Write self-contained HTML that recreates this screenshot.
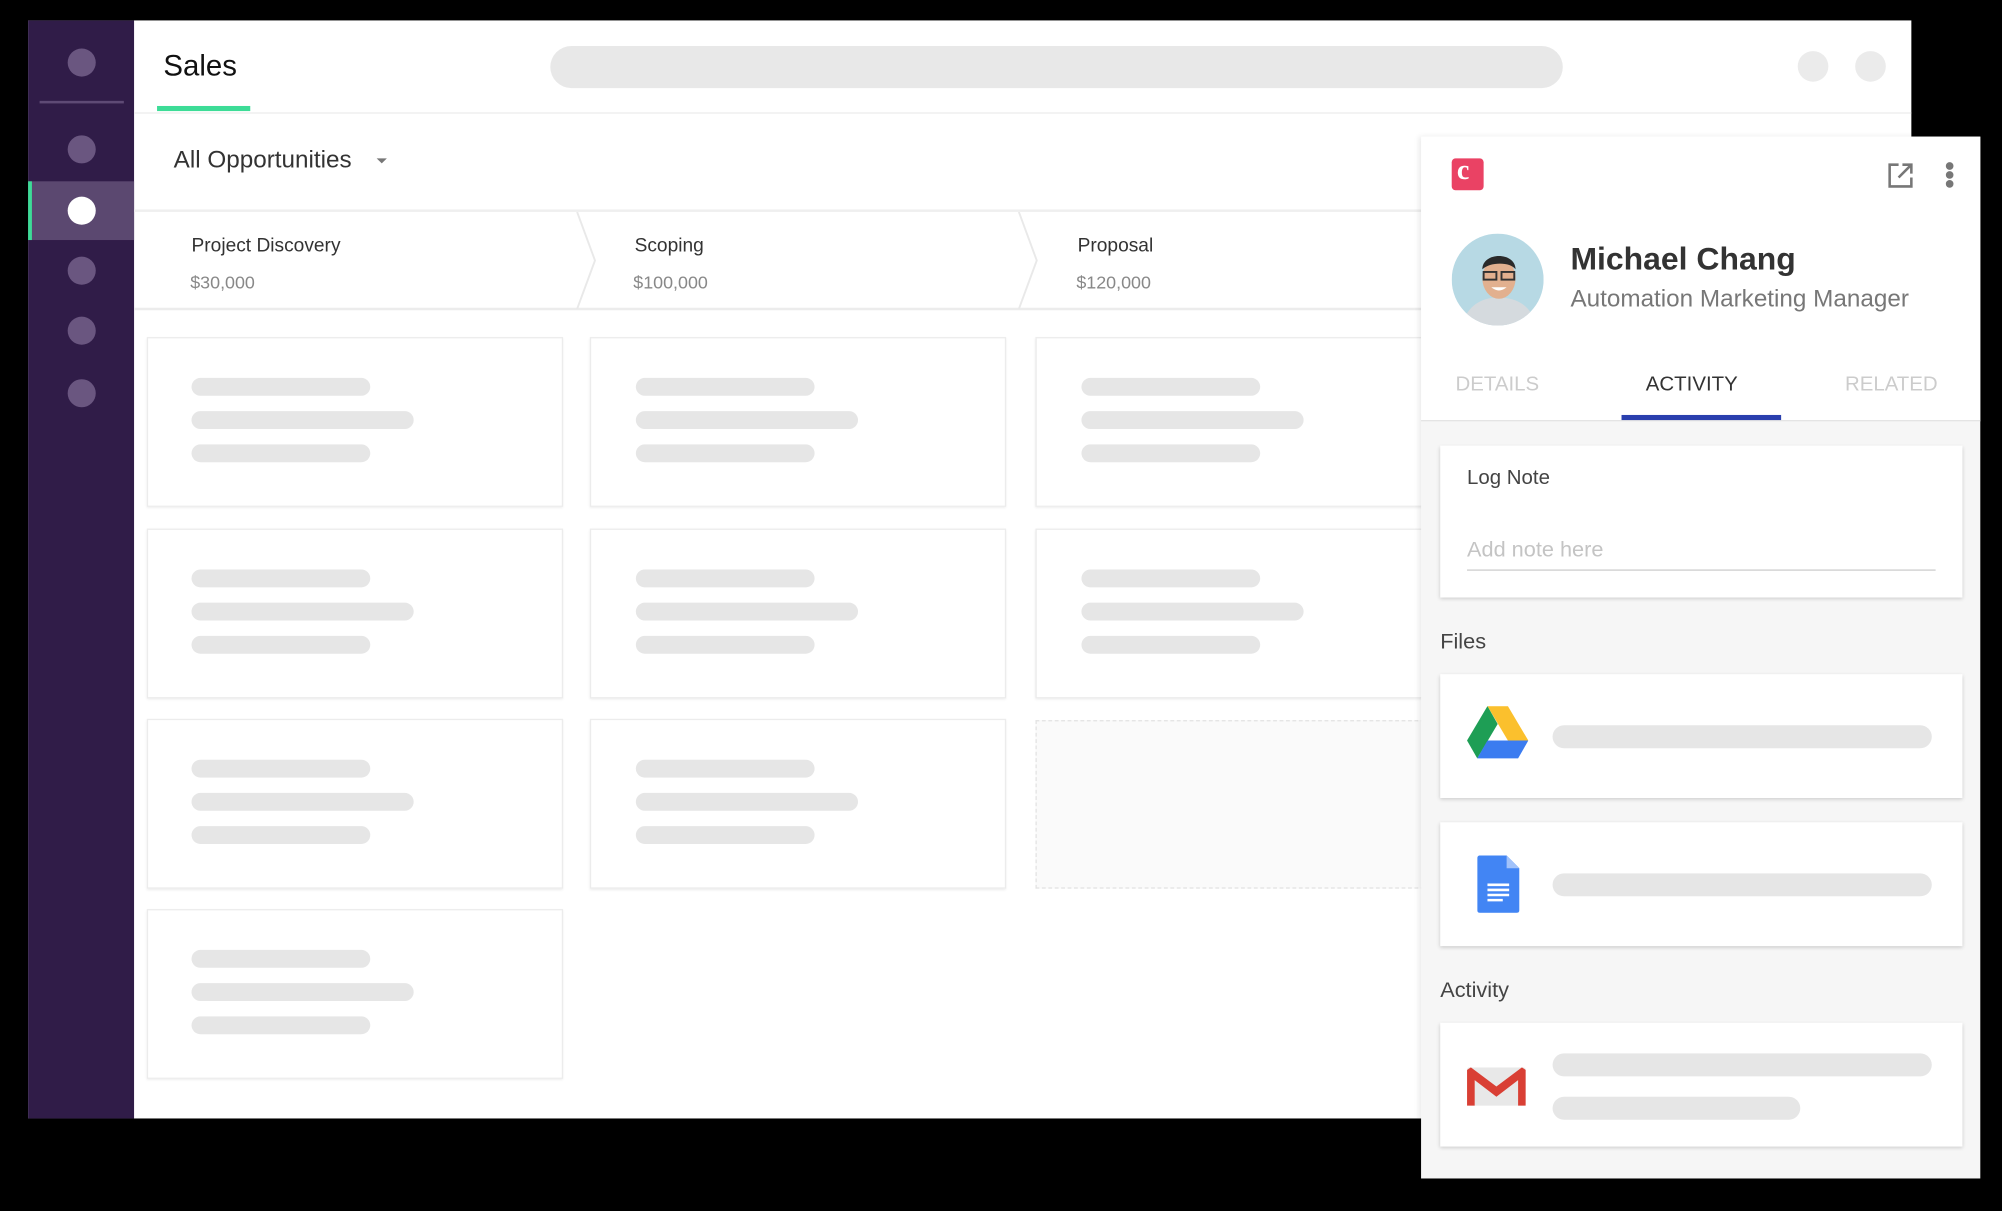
<!DOCTYPE html>
<html><head><meta charset="utf-8"><style>
html,body{margin:0;padding:0;background:#000;width:2002px;height:1211px;overflow:hidden}
#w{position:absolute;left:0;top:0;width:1568px;height:948px;transform:scale(1.27679);transform-origin:0 0;font-family:"Liberation Sans",sans-serif}
.a{position:absolute}
.c{position:absolute;border-radius:50%}
.bar{position:absolute;background:#e6e6e6;border-radius:8px;height:14px}
.card{position:absolute;background:#fff;border:1.5px solid #ececec;box-shadow:0 1px 2px rgba(0,0,0,.08);box-sizing:border-box;width:326px;height:133px}
.pc{position:absolute;left:1128px;width:409px;background:#fff;box-shadow:0 1px 3px rgba(0,0,0,.18)}
.t{position:absolute;white-space:nowrap}
</style></head><body><div id="w">
<!-- main window -->
<div class="a" style="left:22px;top:16px;width:1475px;height:860px;background:#fff"></div>
<div class="a" style="left:22px;top:16px;width:83px;height:860px;background:#301c48"></div>
<div class="c" style="left:53px;top:38px;width:22px;height:22px;background:#6a5680"></div>
<div class="a" style="left:31px;top:79px;width:66px;height:1.5px;background:#5e4a75"></div>
<div class="c" style="left:53px;top:106px;width:22px;height:22px;background:#6a5680"></div>
<div class="a" style="left:22px;top:142px;width:83px;height:46px;background:#5b4870"></div>
<div class="a" style="left:22px;top:142px;width:3px;height:46px;background:#3ddc97"></div>
<div class="c" style="left:53px;top:154px;width:22px;height:22px;background:#fff"></div>
<div class="c" style="left:53px;top:201px;width:22px;height:22px;background:#6a5680"></div>
<div class="c" style="left:53px;top:248px;width:22px;height:22px;background:#6a5680"></div>
<div class="c" style="left:53px;top:297px;width:22px;height:22px;background:#6a5680"></div>
<!-- header -->
<div class="t" style="left:128px;top:38px;font-size:23px;color:#111">Sales</div>
<div class="a" style="left:123px;top:83px;width:73px;height:4px;background:#3ddc97"></div>
<div class="a" style="left:105px;top:88px;width:1392px;height:1px;background:#ececec"></div>
<div class="a" style="left:431px;top:36px;width:793px;height:33px;border-radius:17px;background:#e8e8e8"></div>
<div class="c" style="left:1408px;top:40px;width:24px;height:24px;background:#ebebeb"></div>
<div class="c" style="left:1453px;top:40px;width:24px;height:24px;background:#ebebeb"></div>
<div class="t" style="left:136px;top:115px;font-size:19px;color:#333">All Opportunities</div>
<div class="a" style="left:295px;top:124px;width:0;height:0;border-left:4px solid transparent;border-right:4px solid transparent;border-top:4px solid #777"></div>
<!-- stage bar -->
<div class="a" style="left:105px;top:164px;width:1392px;height:2px;background:#efefef"></div>
<div class="a" style="left:105px;top:241px;width:1392px;height:2px;background:#ececec"></div>
<svg class="a" style="left:440px;top:166px" width="400" height="76"><path d="M12 0 L26 38 L12 76 M358 0 L372 38 L358 76" fill="none" stroke="#e9e9e9" stroke-width="1.5"/></svg>
<div class="t" style="left:150px;top:184px;font-size:15px;color:#333">Project Discovery</div>
<div class="t" style="left:149px;top:213px;font-size:14px;color:#888">$30,000</div>
<div class="t" style="left:497px;top:184px;font-size:15px;color:#333">Scoping</div>
<div class="t" style="left:496px;top:213px;font-size:14px;color:#888">$100,000</div>
<div class="t" style="left:844px;top:184px;font-size:15px;color:#333">Proposal</div>
<div class="t" style="left:843px;top:213px;font-size:14px;color:#888">$120,000</div>
<!-- cards -->
<div id="cards"></div>
<div class="card" style="left:115px;top:264px"><div class="bar" style="left:34px;top:31px;width:140px"></div><div class="bar" style="left:34px;top:57px;width:174px"></div><div class="bar" style="left:34px;top:83px;width:140px"></div></div>
<div class="card" style="left:462px;top:264px"><div class="bar" style="left:35px;top:31px;width:140px"></div><div class="bar" style="left:35px;top:57px;width:174px"></div><div class="bar" style="left:35px;top:83px;width:140px"></div></div>
<div class="card" style="left:811px;top:264px"><div class="bar" style="left:35px;top:31px;width:140px"></div><div class="bar" style="left:35px;top:57px;width:174px"></div><div class="bar" style="left:35px;top:83px;width:140px"></div></div>
<div class="card" style="left:115px;top:414px"><div class="bar" style="left:34px;top:31px;width:140px"></div><div class="bar" style="left:34px;top:57px;width:174px"></div><div class="bar" style="left:34px;top:83px;width:140px"></div></div>
<div class="card" style="left:462px;top:414px"><div class="bar" style="left:35px;top:31px;width:140px"></div><div class="bar" style="left:35px;top:57px;width:174px"></div><div class="bar" style="left:35px;top:83px;width:140px"></div></div>
<div class="card" style="left:811px;top:414px"><div class="bar" style="left:35px;top:31px;width:140px"></div><div class="bar" style="left:35px;top:57px;width:174px"></div><div class="bar" style="left:35px;top:83px;width:140px"></div></div>
<div class="card" style="left:115px;top:563px"><div class="bar" style="left:34px;top:31px;width:140px"></div><div class="bar" style="left:34px;top:57px;width:174px"></div><div class="bar" style="left:34px;top:83px;width:140px"></div></div>
<div class="card" style="left:462px;top:563px"><div class="bar" style="left:35px;top:31px;width:140px"></div><div class="bar" style="left:35px;top:57px;width:174px"></div><div class="bar" style="left:35px;top:83px;width:140px"></div></div>
<div class="a" style="left:811px;top:564px;width:330px;height:132px;border:1.5px dashed #e2e2e2;background:#fafafa;box-sizing:border-box"></div>
<div class="card" style="left:115px;top:712px"><div class="bar" style="left:34px;top:31px;width:140px"></div><div class="bar" style="left:34px;top:57px;width:174px"></div><div class="bar" style="left:34px;top:83px;width:140px"></div></div>
<!-- right panel -->
<div class="a" style="left:1113px;top:107px;width:438px;height:816px;background:#f6f6f6;box-shadow:-2px 0 4px rgba(0,0,0,.08)"></div>
<div class="a" style="left:1113px;top:107px;width:438px;height:222px;background:#fff;border-bottom:1px solid #e2e2e2"></div>
<div class="a" style="left:1137px;top:124px;width:25px;height:25px;border-radius:3px;background:#ea4264"></div>
<div class="t" style="left:1141px;top:120px;font-size:22px;font-weight:bold;color:#fff;font-family:'Liberation Serif',serif">c</div>
<svg class="a" style="left:1478px;top:127px" width="21" height="21" viewBox="0 0 21 21"><path d="M9 2H2v17h17v-7" fill="none" stroke="#777" stroke-width="2"/><path d="M12 2h7v7M19 2L9 12" fill="none" stroke="#777" stroke-width="2"/></svg>
<div class="c" style="left:1524px;top:127px;width:6px;height:6px;background:#777"></div>
<div class="c" style="left:1524px;top:134px;width:6px;height:6px;background:#777"></div>
<div class="c" style="left:1524px;top:141px;width:6px;height:6px;background:#777"></div>
<svg class="a" style="left:1137px;top:183px" width="72" height="72" viewBox="0 0 72 72"><defs><clipPath id="cp"><circle cx="36" cy="36" r="36"/></clipPath></defs><g clip-path="url(#cp)"><rect width="72" height="72" fill="#b7d9e4"/><path d="M8 72 C12 56 24 50 36 50 C48 50 62 54 66 72Z" fill="#d5dade"/><ellipse cx="37" cy="35" rx="13" ry="16" fill="#e2b08f"/><path d="M24 28 C24 14 50 14 50 28 C46 22 30 22 24 28Z" fill="#2a2a2a"/><rect x="25" y="30" width="10" height="6" fill="none" stroke="#333" stroke-width="1.5"/><rect x="39" y="30" width="10" height="6" fill="none" stroke="#333" stroke-width="1.5"/><path d="M31 42 Q37 47 43 42" fill="#fff"/></g></svg>
<div class="t" style="left:1230px;top:189px;font-size:25px;font-weight:bold;color:#333">Michael Chang</div>
<div class="t" style="left:1230px;top:224px;font-size:19px;color:#777">Automation Marketing Manager</div>
<div class="t" style="left:1140px;top:293px;font-size:16px;color:#ccc">DETAILS</div>
<div class="t" style="left:1289px;top:293px;font-size:16px;color:#333">ACTIVITY</div>
<div class="t" style="left:1445px;top:293px;font-size:16px;color:#ccc">RELATED</div>
<div class="a" style="left:1270px;top:325px;width:125px;height:4px;background:#2a3fae"></div>
<!-- log note -->
<div class="pc" style="top:349px;height:119px"></div>
<div class="t" style="left:1149px;top:366px;font-size:16px;color:#444">Log Note</div>
<div class="t" style="left:1149px;top:421px;font-size:17px;color:#c4c4c4">Add note here</div>
<div class="a" style="left:1149px;top:446px;width:367px;height:1px;background:#ccc"></div>
<div class="t" style="left:1128px;top:493px;font-size:17px;color:#444">Files</div>
<div class="pc" style="top:528px;height:97px"></div>
<svg class="a" style="left:1149px;top:553px" width="48" height="42" viewBox="0 0 48 42"><path d="M16 0h16l16 27h-16z" fill="#fbc02d"/><path d="M16 0L0 27l8 14 16-27z" fill="#1e9e55"/><path d="M8 41h32l8-14H16z" fill="#3b7cf0"/></svg>
<div class="bar" style="left:1216px;top:568px;width:297px;height:18px;border-radius:9px"></div>
<div class="pc" style="top:644px;height:97px"></div>
<svg class="a" style="left:1157px;top:670px" width="33" height="45" viewBox="0 0 33 45"><path d="M2 0h21l10 10v33a2 2 0 0 1-2 2H2a2 2 0 0 1-2-2V2a2 2 0 0 1 2-2z" fill="#4285f4"/><path d="M23 0l10 10H23z" fill="#a1c2fa"/><path d="M8 23h17M8 27h17M8 31h17M8 35h12" stroke="#fff" stroke-width="2"/></svg>
<div class="bar" style="left:1216px;top:684px;width:297px;height:18px;border-radius:9px"></div>
<div class="t" style="left:1128px;top:766px;font-size:17px;color:#444">Activity</div>
<div class="pc" style="top:801px;height:97px"></div>
<svg class="a" style="left:1149px;top:836px" width="46" height="30" viewBox="0 0 46 30"><rect x="0" y="0" width="46" height="30" rx="2" fill="#e8e8e8"/><path d="M0 2v28h6V10l17 13 17-13v20h6V2l-3-2-20 15L3 0z" fill="#d93f34"/></svg>
<div class="bar" style="left:1216px;top:825px;width:297px;height:18px;border-radius:9px"></div>
<div class="bar" style="left:1216px;top:859px;width:194px;height:18px;border-radius:9px"></div>
</div></body></html>
